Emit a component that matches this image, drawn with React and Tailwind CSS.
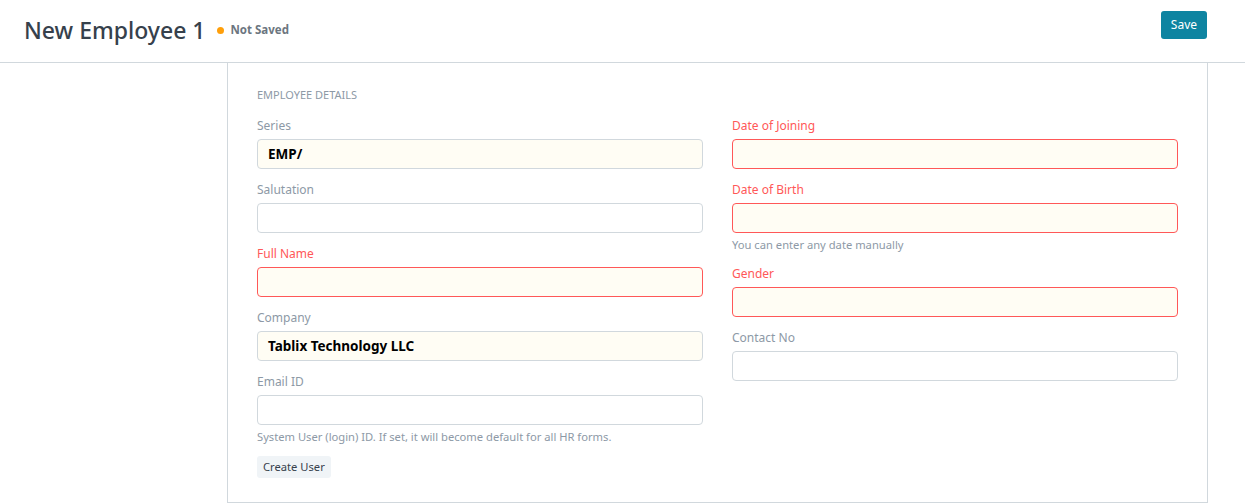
import React from "react";

const F = { fontFamily: '"Noto Sans", "Open Sans", sans-serif' };

function Field({ label, value, error, yellow, help }) {
  return (
    <div className="flex flex-col">
      <div className={`text-[12px] leading-[16px] h-[16px] ${error ? "text-[#ff5858]" : "text-[#8d99a6]"}`}>{label}</div>
      <div
        className={`mt-[5px] h-[30px] rounded-[4px] border flex items-center px-[10px] text-[13.5px] font-bold text-black ${
          error ? "border-[#ff5858]" : "border-[#d1d8dd]"
        } ${yellow ? "bg-[#fffdf4]" : "bg-white"}`}
      >
        {value}
      </div>
      {help && <div className="text-[11.2px] leading-[16px] mt-[4px] text-[#8d99a6]">{help}</div>}
    </div>
  );
}

export default function App() {
  return (
    <div className="w-[1245px] h-[503px] bg-white overflow-hidden" style={F}>
      <div className="h-[63px] border-b border-[#d1d8dd] flex items-center justify-between pl-[24px] pr-[38px]">
        <div className="flex items-center mt-[-2px]">
          <div className="text-[23px] text-[#36414c] font-medium leading-none">New Employee 1</div>
          <div className="ml-[12px] w-[7px] h-[7px] rounded-full bg-[#ff9f0a]" />
          <div className="ml-[6px] text-[11.5px] font-bold text-[#6c7680]">Not Saved</div>
        </div>
        <div className="mt-[-12px] h-[28px] px-[10px] rounded-[3px] bg-[#0e84a1] text-white text-[12px] flex items-center">Save</div>
      </div>
      <div className="ml-[227px] w-[981px] h-[440px] border-x border-b border-[#d1d8dd] px-[29px] pt-[24px]">
        <div className="text-[11px] text-[#8d99a6] uppercase h-[16px] leading-[16px]">Employee Details</div>
        <div className="mt-[15px] grid grid-cols-[446px_446px] gap-x-[29px]">
          <div className="flex flex-col gap-[13px]">
            <Field label="Series" value="EMP/" yellow />
            <Field label="Salutation" />
            <Field label="Full Name" error yellow />
            <Field label="Company" value="Tablix Technology LLC" yellow />
            <Field label="Email ID" help="System User (login) ID. If set, it will become default for all HR forms." />
            <div className="mt-[-2px] self-start h-[22px] px-[6px] rounded-[3px] bg-[#f0f4f7] text-[11.2px] text-[#36414c] flex items-center">Create User</div>
          </div>
          <div className="flex flex-col gap-[13px]">
            <Field label="Date of Joining" error yellow />
            <Field label="Date of Birth" error yellow help="You can enter any date manually" />
            <Field label="Gender" error yellow />
            <Field label="Contact No" />
          </div>
        </div>
      </div>
    </div>
  );
}
